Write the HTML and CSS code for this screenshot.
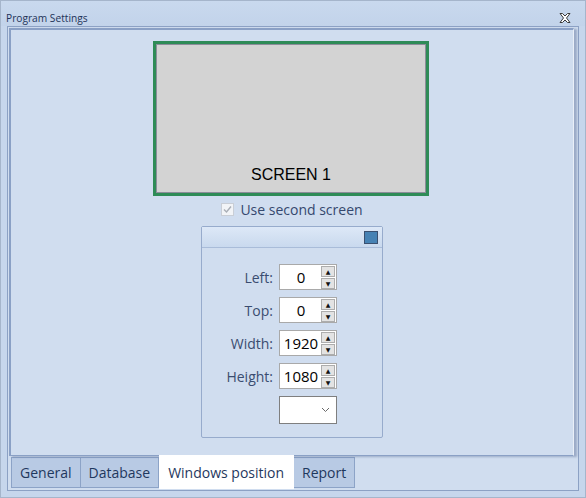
FILE: index.html
```html
<!DOCTYPE html>
<html>
<head>
<meta charset="utf-8">
<link rel="stylesheet" href="styles.css">
</head>
<body>
<div class="window">
  <div class="titlebar">
    <span class="title">Program Settings</span>
    <svg class="close" width="12" height="10" viewBox="0 0 12 10">
      <polygon points="1,0.5 3.5,0.5 6,3 8.5,0.5 11,0.5 7.5,5 11,9.5 8.5,9.5 6,7 3.5,9.5 1,9.5 4.5,5" fill="#fff" stroke="#3a3a3a" stroke-width="1" stroke-linejoin="round"/>
    </svg>
  </div>
  <div class="frame">
    <div class="page">
      <div class="monitor">
        <div class="screen"><span class="screen-label">SCREEN 1</span></div>
      </div>
      <label class="check-row">
        <span class="checkbox">
          <svg width="11" height="11" viewBox="0 0 11 11"><path d="M2 5.5 L4.5 8 L9 2.5" fill="none" stroke="#a9aeb6" stroke-width="1.4"/></svg>
        </span>
        <span class="check-text">Use second screen</span>
      </label>
      <div class="group">
        <div class="group-head"><span class="swatch"></span></div>
        <div class="group-body">
          <span class="lbl">Left:</span>
          <div class="spin"><span class="val">0</span><span class="btns"><span class="btn">&#9650;</span><span class="btn">&#9660;</span></span></div>
          <span class="lbl">Top:</span>
          <div class="spin"><span class="val">0</span><span class="btns"><span class="btn">&#9650;</span><span class="btn">&#9660;</span></span></div>
          <span class="lbl">Width:</span>
          <div class="spin"><span class="val">1920</span><span class="btns"><span class="btn">&#9650;</span><span class="btn">&#9660;</span></span></div>
          <span class="lbl">Height:</span>
          <div class="spin"><span class="val">1080</span><span class="btns"><span class="btn">&#9650;</span><span class="btn">&#9660;</span></span></div>
          <span></span>
          <div class="combo">
            <svg width="9" height="6" viewBox="0 0 9 6"><path d="M1 1 L4.5 4.5 L8 1" fill="none" stroke="#6a6a6a" stroke-width="1"/></svg>
          </div>
        </div>
      </div>
    </div>
    <div class="tabs">
      <span class="tab">General</span>
      <span class="tab">Database</span>
      <span class="tab active">Windows position</span>
      <span class="tab">Report</span>
    </div>
  </div>
</div>
</body>
</html>
```

FILE: styles.css
```css
html, body {
  margin: 0;
  padding: 0;
}
body {
  width: 586px;
  height: 498px;
  overflow: hidden;
  font-family: "Open Sans", "Noto Sans", sans-serif;
}
.window {
  box-sizing: border-box;
  width: 586px;
  height: 498px;
  background: #c6d6ec;
  border: 1px solid #a5b5cb;
  display: flex;
  flex-direction: column;
}
.titlebar {
  height: 25px;
  display: flex;
  align-items: center;
  justify-content: space-between;
  padding: 0 14px 0 5px;
  background: linear-gradient(#c9d9ee, #c2d3ea);
}
.title {
  font-size: 10.2px;
  color: #1e3358;
  margin-top: 8px;
}
.close {
  margin-top: 8px;
}
.frame {
  box-sizing: border-box;
  margin-left: 6px;
  width: 572px;
  height: 465px;
  border: 1px solid #8ca1c4;
  background: #d0ddef;
  display: flex;
  flex-direction: column;
}
.page {
  box-sizing: border-box;
  height: 428px;
  margin: 1px 4px 0 1px;
  border-top: 2px solid #8aa0c5;
  border-left: 2px solid #8aa0c5;
  border-right: 1px solid #e9eff8;
  border-bottom: 1px solid #8aa0c5;
  box-shadow: 3px 1px 2px rgba(90, 110, 150, 0.45);
  display: flex;
  flex-direction: column;
  align-items: center;
  padding-top: 11px;
  position: relative;
  z-index: 1;
}
.monitor {
  box-sizing: border-box;
  width: 276px;
  height: 155px;
  border: 3px solid #2e8b57;
  display: flex;
  margin-right: 2px;
}
.screen {
  flex: 1;
  border: 1px solid #8c8c9a;
  background: #d3d3d3;
  display: flex;
  align-items: flex-end;
  justify-content: center;
  padding-bottom: 8px;
}
.screen-label {
  font-family: "Liberation Sans", Arial, sans-serif;
  font-size: 16px;
  color: #000;
}
.check-row {
  display: flex;
  align-items: center;
  margin-top: 4px;
  height: 18px;
  gap: 6px;
}
.checkbox {
  box-sizing: border-box;
  width: 13px;
  height: 13px;
  border: 1px solid #c9ced6;
  background: #f2f4f7;
  display: flex;
  align-items: center;
  justify-content: center;
}
.check-text {
  font-size: 14px;
  color: #35486e;
}
.group {
  box-sizing: border-box;
  width: 182px;
  height: 212px;
  margin-top: 8px;
  border: 1px solid #97abcc;
  border-radius: 2px;
  display: flex;
  flex-direction: column;
}
.group-head {
  height: 20px;
  border-bottom: 1px solid #a9bcd9;
  background: linear-gradient(#dde8f7, #c9d9ee);
  display: flex;
  justify-content: flex-end;
  align-items: center;
  padding-right: 4px;
}
.swatch {
  box-sizing: border-box;
  width: 14px;
  height: 13px;
  background: #4682b4;
  border: 1px solid #3a5070;
}
.group-body {
  display: grid;
  grid-template-columns: 71px 58px;
  column-gap: 6px;
  row-gap: 7px;
  padding-top: 16px;
  align-items: center;
}
.lbl {
  text-align: right;
  font-size: 14px;
  color: #3a4c70;
}
.spin {
  box-sizing: border-box;
  height: 26px;
  border: 1px solid #a9a9a9;
  background: #fff;
  display: flex;
  align-items: center;
  padding: 1px;
}
.val {
  flex: 1;
  text-align: center;
  font-size: 15px;
  color: #000;
}
.btns {
  display: flex;
  flex-direction: column;
  gap: 1px;
  width: 14px;
}
.btn {
  box-sizing: border-box;
  height: 11px;
  background: #e3e3e3;
  border: 1px solid #adadad;
  font-size: 6px;
  line-height: 9px;
  text-align: center;
  color: #111;
  font-family: "DejaVu Sans", sans-serif;
}
.combo {
  box-sizing: border-box;
  height: 28px;
  border: 1px solid #7f7f7f;
  background: #fff;
  display: flex;
  align-items: center;
  justify-content: flex-end;
  padding-right: 6px;
}
.tabs {
  display: flex;
  padding-left: 3px;
  align-items: flex-start;
  margin-top: 1px;
}
.tab {
  box-sizing: border-box;
  height: 31px;
  padding: 0 8px;
  display: flex;
  align-items: center;
  background: #b8cae4;
  border: 1px solid #8ca3c7;
  border-left: none;
  font-size: 14px;
  color: #1f385e;
}
.tab:first-child {
  border-left: 1px solid #8ca3c7;
}
.tab.active {
  background: #fff;
  height: 34px;
  margin-top: -2px;
  padding: 0 9px;
  border-color: #fff;
  position: relative;
  z-index: 2;
}
```
